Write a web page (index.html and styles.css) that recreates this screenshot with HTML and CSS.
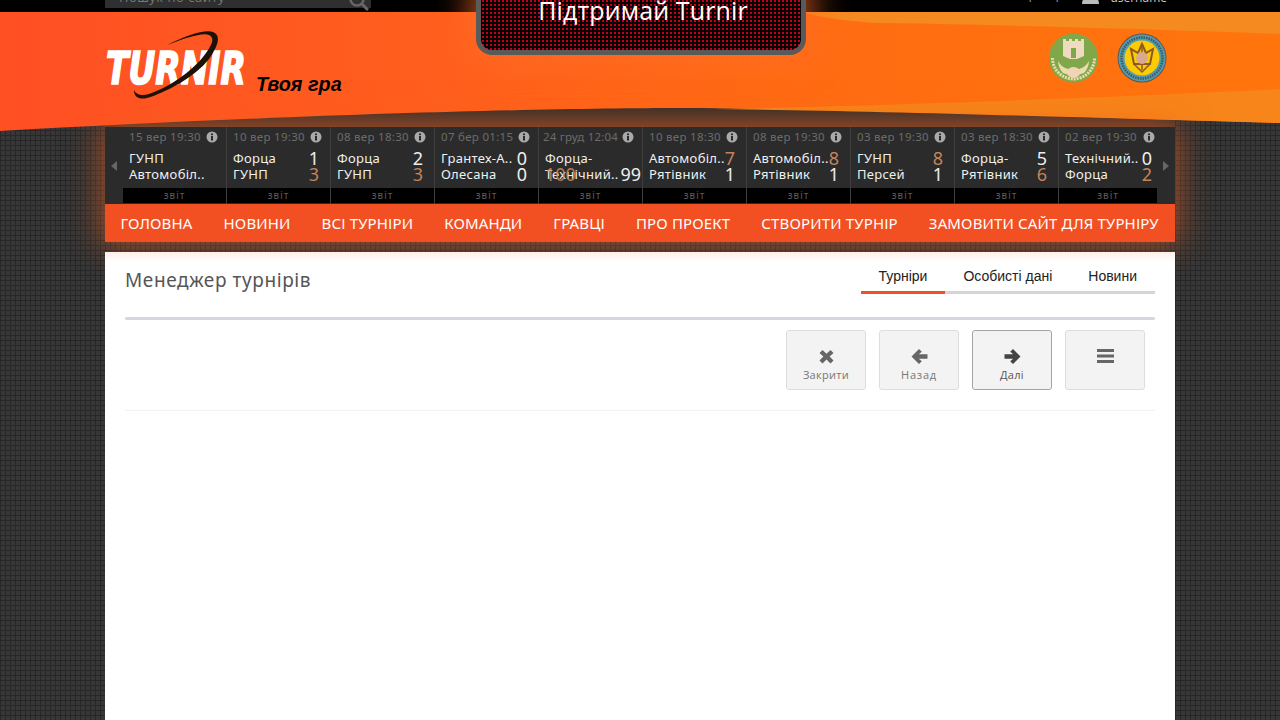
FILE: index.html
```html
<!DOCTYPE html>
<html lang="uk">
<head>
<meta charset="utf-8">
<title>Turnir</title>
<link rel="stylesheet" href="styles.css">
</head>
<body>
<div class="topbar">
  <div class="wrap topbar-in">
    <div class="search"><span>Пошук по сайту</span>
      <svg class="search-ico" width="20" height="20" viewBox="0 0 20 20"><circle cx="8" cy="8" r="6.5" fill="none" stroke="#666" stroke-width="2.5"/><path d="M13 13l6 6" stroke="#666" stroke-width="3"/></svg>
    </div>
    <div class="user">
      <span class="lang">Г</span><span class="lang">Г</span>
      <svg class="user-ico" width="17" height="16" viewBox="0 0 17 16"><circle cx="8.5" cy="4" r="4" fill="#bbb"/><path d="M0 16c0-6 4-7 8.5-7s8.500 1 8.500 7z" fill="#bbb"/></svg>
      <span class="username">username</span>
    </div>
  </div>
</div>

<header class="hero">
  <svg class="hero-bg" width="1280" height="125" viewBox="0 0 1280 125">
    <defs>
      <linearGradient id="hg" x1="0" x2="1" y1="0" y2="0">
        <stop offset="0" stop-color="#ff4f24"/>
        <stop offset=".3" stop-color="#ff5d1f"/>
        <stop offset=".6" stop-color="#ff6b14"/>
        <stop offset="1" stop-color="#ff750c"/>
      </linearGradient>
      <linearGradient id="sh" x1="0" x2="0" y1="0" y2="1">
        <stop offset="0" stop-color="#2d2a2a"/>
        <stop offset="1" stop-color="#4a362c"/>
      </linearGradient>
    </defs>
    <rect x="105" y="90" width="1070" height="25" fill="url(#sh)"/>
    <path d="M0 0H1280V111C1100 106 850 96 680 96C560 96 300 102 0 119Z" fill="url(#hg)"/>
    <path d="M800 0H1280V22C1150 17 960 12 880 11C850 10 820 5 800 0Z" fill="#f58a20"/>
    <path d="M700 97C820 96 1100 86 1280 77V111C1100 106 850 98 700 97Z" fill="#f7851a"/>
  </svg>
  <div class="wrap hero-in">
    <div class="brand">
      <svg class="logo" width="143" height="72" viewBox="0 0 143 72">
        <text class="logo-text" x="1" y="53" textLength="140" lengthAdjust="spacingAndGlyphs">TURNIR</text>
        <path d="M62 14C80 5 100 -2 108 1C116 4 114 14 104 28C90 46 60 62 42 67C34 69 29 66 29 59C31 64 37 65 44 63C62 57 85 42 98 26C108 13 110 7 104 4C98 1 80 7 62 14Z" fill="#1c1208"/>
      </svg>
      <span class="tagline">Твоя гра</span>
    </div>
    <div class="crests">
      <svg width="50" height="50" viewBox="0 0 50 50">
        <circle cx="24.500" cy="25" r="24.500" fill="#80a84a"/>
        <path d="M14 6h3v2h3V6h3v2h3V6h3v2h3V6h3v17l-7 3h-7l-7-3z" fill="#efdcc0"/>
        <rect x="22" y="15" width="5" height="10" fill="#80a84a"/>
        <path d="M3.500 25A21 21 0 0 0 45.500 25" fill="none" stroke="#e9dcae" stroke-width="3" stroke-dasharray="2 1"/>
        <path d="M9 28c3 5 6 7 10 8l1 6-6-2C11 37 9 32 9 28zM40 28c-3 5-6 7-10 8l-1 6 6-2c3-3 5-8 5-12z" fill="#e9dcae"/>
        <path d="M18 37c4-4 9-4 13 0 1 5-3 8-6.500 8S17 42 18 37z" fill="#f3d3b6"/>
      </svg>
      <svg width="50" height="50" viewBox="0 0 50 50">
        <circle cx="25" cy="25" r="24.500" fill="#5b5b50"/>
        <circle cx="25" cy="25" r="23.500" fill="#549bb0"/>
        <circle cx="25" cy="25" r="20.500" fill="none" stroke="#3c5a60" stroke-width="2.500" stroke-dasharray="1.500 1"/>
        <circle cx="25" cy="25" r="17.500" fill="#fccb06"/>
        <path d="M25 11l4 9 7-4-3 15H17l-3-15 7 4z" fill="none" stroke="#8c5a20" stroke-width="2"/>
        <path d="M25 13v24M17 31l8 8 8-8" fill="none" stroke="#8c5a20" stroke-width="1.500"/>
        <circle cx="25" cy="25" r="6" fill="#d9a890"/>
      </svg>
    </div>
  </div>
  <div class="promo"><span>Підтримай Turnir</span></div>
</header>

<div class="wrap band">
  <section class="ticker">
    <div class="arrow"><i class="tri tri-l"></i></div>
    <div class="cards">
      <article class="card">
        <div class="date"><span>15 вер 19:30</span><svg class="info" viewBox="0 0 12 12"><circle cx="6" cy="6" r="5.500"/><rect x="5" y="5" width="2" height="4.500"/><rect x="5" y="2.500" width="2" height="1.700"/></svg></div>
        <div class="teams"><div class="row"><span>ГУНП</span></div><div class="row"><span>Автомобіл..</span></div></div>
        <a class="report">звіт</a>
      </article>
      <article class="card">
        <div class="date"><span>10 вер 19:30</span><svg class="info" viewBox="0 0 12 12"><circle cx="6" cy="6" r="5.500"/><rect x="5" y="5" width="2" height="4.500"/><rect x="5" y="2.500" width="2" height="1.700"/></svg></div>
        <div class="teams"><div class="row"><span>Форца</span><b>1</b></div><div class="row"><span>ГУНП</span><b class="win">3</b></div></div>
        <a class="report">звіт</a>
      </article>
      <article class="card">
        <div class="date"><span>08 вер 18:30</span><svg class="info" viewBox="0 0 12 12"><circle cx="6" cy="6" r="5.500"/><rect x="5" y="5" width="2" height="4.500"/><rect x="5" y="2.500" width="2" height="1.700"/></svg></div>
        <div class="teams"><div class="row"><span>Форца</span><b>2</b></div><div class="row"><span>ГУНП</span><b class="win">3</b></div></div>
        <a class="report">звіт</a>
      </article>
      <article class="card">
        <div class="date"><span>07 бер 01:15</span><svg class="info" viewBox="0 0 12 12"><circle cx="6" cy="6" r="5.500"/><rect x="5" y="5" width="2" height="4.500"/><rect x="5" y="2.500" width="2" height="1.700"/></svg></div>
        <div class="teams"><div class="row"><span>Грантех-А..</span><b>0</b></div><div class="row"><span>Олесана</span><b>0</b></div></div>
        <a class="report">звіт</a>
      </article>
      <article class="card card-wide">
        <div class="date"><span>24 груд 12:04</span><svg class="info" viewBox="0 0 12 12"><circle cx="6" cy="6" r="5.500"/><rect x="5" y="5" width="2" height="4.500"/><rect x="5" y="2.500" width="2" height="1.700"/></svg></div>
        <div class="teams"><div class="row"><span>Форца-</span></div><div class="row"><b class="win over">100</b><span>Технічний..</span><b>99</b></div></div>
        <a class="report">звіт</a>
      </article>
      <article class="card">
        <div class="date"><span>10 вер 18:30</span><svg class="info" viewBox="0 0 12 12"><circle cx="6" cy="6" r="5.500"/><rect x="5" y="5" width="2" height="4.500"/><rect x="5" y="2.500" width="2" height="1.700"/></svg></div>
        <div class="teams"><div class="row"><span>Автомобіл..</span><b class="win">7</b></div><div class="row"><span>Рятівник</span><b>1</b></div></div>
        <a class="report">звіт</a>
      </article>
      <article class="card">
        <div class="date"><span>08 вер 19:30</span><svg class="info" viewBox="0 0 12 12"><circle cx="6" cy="6" r="5.500"/><rect x="5" y="5" width="2" height="4.500"/><rect x="5" y="2.500" width="2" height="1.700"/></svg></div>
        <div class="teams"><div class="row"><span>Автомобіл..</span><b class="win">8</b></div><div class="row"><span>Рятівник</span><b>1</b></div></div>
        <a class="report">звіт</a>
      </article>
      <article class="card">
        <div class="date"><span>03 вер 19:30</span><svg class="info" viewBox="0 0 12 12"><circle cx="6" cy="6" r="5.500"/><rect x="5" y="5" width="2" height="4.500"/><rect x="5" y="2.500" width="2" height="1.700"/></svg></div>
        <div class="teams"><div class="row"><span>ГУНП</span><b class="win">8</b></div><div class="row"><span>Персей</span><b>1</b></div></div>
        <a class="report">звіт</a>
      </article>
      <article class="card">
        <div class="date"><span>03 вер 18:30</span><svg class="info" viewBox="0 0 12 12"><circle cx="6" cy="6" r="5.500"/><rect x="5" y="5" width="2" height="4.500"/><rect x="5" y="2.500" width="2" height="1.700"/></svg></div>
        <div class="teams"><div class="row"><span>Форца-</span><b>5</b></div><div class="row"><span>Рятівник</span><b class="win">6</b></div></div>
        <a class="report">звіт</a>
      </article>
      <article class="card">
        <div class="date"><span>02 вер 19:30</span><svg class="info" viewBox="0 0 12 12"><circle cx="6" cy="6" r="5.500"/><rect x="5" y="5" width="2" height="4.500"/><rect x="5" y="2.500" width="2" height="1.700"/></svg></div>
        <div class="teams"><div class="row"><span>Технічний..</span><b>0</b></div><div class="row"><span>Форца</span><b class="win">2</b></div></div>
        <a class="report">звіт</a>
      </article>
    </div>
    <div class="arrow"><i class="tri tri-r"></i></div>
  </section>
  <nav class="nav">
    <a>ГОЛОВНА</a><a>НОВИНИ</a><a>ВСІ ТУРНІРИ</a><a>КОМАНДИ</a><a>ГРАВЦІ</a><a>ПРО ПРОЕКТ</a><a>СТВОРИТИ ТУРНІР</a><a>ЗАМОВИТИ САЙТ ДЛЯ ТУРНІРУ</a>
  </nav>
</div>

<main class="wrap content">
  <div class="title-row">
    <h1>Менеджер турнірів</h1>
    <ul class="tabs">
      <li class="active">Турніри</li><li>Особисті дані</li><li>Новини</li>
    </ul>
  </div>
  <div class="rule"></div>
  <div class="toolbar">
    <button class="tool">
      <svg viewBox="0 0 17 17" width="17" height="17"><path d="M4.500 2L8.500 5.800 12.500 2 15.500 5 11.600 8.500 15.500 12.500 12.500 15.500 8.500 11.600 4.500 15.500 1.500 12.500 5.400 8.500 1.500 5z" fill="#666"/></svg>
      <span>Закрити</span>
    </button>
    <button class="tool">
      <svg viewBox="0 0 17 17" width="17" height="17"><path d="M.5 8.500L8 1l2.800 2.800-3 2.400h8.700v4.600H7.800l3 2.400L8 16z" fill="#666"/></svg>
      <span class="spaced">Назад</span>
    </button>
    <button class="tool tool-on">
      <svg viewBox="0 0 17 17" width="17" height="17"><path d="M16.500 8.500L9 1 6.200 3.800l3 2.400H.5v4.600h8.700l-3 2.400L9 16z" fill="#444"/></svg>
      <span>Далі</span>
    </button>
    <button class="tool">
      <svg viewBox="0 0 17 17" width="17" height="17"><path d="M0 1h17v3H0zM0 6.500h17v3H0zM0 12h17v3H0z" fill="#666"/></svg>
    </button>
  </div>
  <div class="hr"></div>
</main>
</body>
</html>
```

FILE: styles.css
```css
* { box-sizing: border-box; }
html, body { margin: 0; height: 720px; overflow: hidden; }
body {
  background-color: #373737;
  background-image:
    linear-gradient(#272727 1px, transparent 1px),
    linear-gradient(90deg, #272727 1px, transparent 1px);
  background-size: 5px 5px;
  font-family: "Open Sans", "Noto Sans", sans-serif;
}
.wrap { width: 1070px; margin: 0 auto; }

.topbar { height: 12px; background: #000; overflow: hidden; position: relative; }
.topbar-in { display: flex; justify-content: space-between; align-items: flex-end; height: 8px; }
.search {
  width: 266px; height: 30px; flex: none; background: #2f2f2f;
  color: #777; font-size: 13px; letter-spacing: .5px;
  display: flex; justify-content: space-between; align-items: flex-end;
  padding: 0 2px 0 14px;
}
.search span { line-height: 14px; margin-bottom: 4px; }
.search-ico { margin-bottom: -3px; }
.user {
  width: 160px; height: 30px; flex: none;
  display: flex; align-items: flex-end; justify-content: flex-end;
  color: #ccc; font-size: 12px; padding-right: 8px;
}
.lang { width: 27px; line-height: 14px; color: #999; font-size: 12px; margin-bottom: 3px; }
.user-ico { margin: 0 11px 4px 0; }
.username { line-height: 14px; margin-bottom: 3px; }

.hero { height: 115px; position: relative; }
.hero-bg { position: absolute; left: 0; top: 0; }
.hero-in {
  position: relative; height: 100%;
  display: flex; justify-content: space-between; align-items: flex-start;
}
.brand { display: flex; align-items: flex-start; padding-top: 19px; }
.logo { flex: none; overflow: visible; }
.logo-text {
  font-family: "DejaVu Sans", sans-serif; font-weight: 700; font-style: italic; font-size: 44px;
  fill: #fff; stroke: #fff; stroke-width: 1.6px;
}
.tagline {
  font-family: "Liberation Sans", sans-serif; font-weight: 700; font-style: italic;
  font-size: 19.800px; color: #000; margin: 41px 0 0 9px; line-height: 24px;
  margin-left: 8px;
}
.crests { display: flex; gap: 18px; padding: 21px 8px 0 0; }
.promo {
  position: absolute; left: 476px; top: -30px; width: 330px; height: 73px;
  border: 5px solid #5a5a5a; border-radius: 0 0 16px 16px;
  background-color: #080002;
  background-image: radial-gradient(circle, #c80018 0.7px, transparent 1.1px);
  background-size: 4px 4px;
  color: #fff; font-size: 25px; line-height: 34px; text-align: center;
  padding-top: 11px;
  box-shadow: 0 0 34px 6px rgba(255, 110, 40, .7);
}
.promo span { display: block; margin-left: 4px; margin-top: -5px; letter-spacing: .12px; }

.band {
  position: relative; z-index: 2;
  box-shadow: 0 0 30px 3px rgba(240, 95, 30, .6);
}
.ticker { height: 77px; background: #2b2b2b; display: flex; }
.arrow { width: 18px; flex: none; display: flex; align-items: center; justify-content: center; position: relative; }
.tri { display: block; width: 0; height: 0; border-style: solid; border-color: transparent; }
.tri-l { border-width: 5px 6px 5px 0; border-right-color: #666; }
.tri-r { border-width: 5px 0 5px 6px; border-left-color: #666; }
.cards { display: flex; width: 1034px; }
.card {
  width: 104px; flex: none; height: 77px; position: relative;
  border-right: 1px solid #3e3e3e;
  display: flex; flex-direction: column;
}
.card:last-child { border-right: 0; }
.card:last-child .report { width: 98px; }
.date {
  height: 19px; flex: none; padding: 0 8px 0 6px;
  display: flex; justify-content: space-between; align-items: center;
  color: #6c6c6c; font-size: 11.500px; letter-spacing: .3px; white-space: nowrap;
  font-family: "Noto Sans", sans-serif;
}
.card-wide .date { padding-left: 4px; letter-spacing: .2px; }
.info { width: 12px; height: 12px; fill: #a9a9a9; flex: none; }
.info rect { fill: #2b2b2b; }
.teams { margin-top: 4px; height: 32px; flex: none; padding: 0 11px 0 6px; }
.card-wide .teams { padding-left: 6px; padding-right: 1px; }
.row {
  position: relative; height: 16px; line-height: 16px;
  display: flex; justify-content: space-between; align-items: center;
  color: #f0f0f0; font-size: 13px; font-family: "Noto Sans", sans-serif; letter-spacing: .3px;
  white-space: nowrap;
}
.row b { font-weight: 400; font-size: 18px; letter-spacing: 0; color: #eee; }
.row b.win { color: #c6835a; }
.row b.over { position: absolute; left: 0; top: 0; opacity: .9; }
.report {
  margin-top: 6px; height: 15px; flex: none; background: #000; display: block; text-align: center;
  color: #5c5c5c; font-size: 10px; line-height: 15px; letter-spacing: 1px;
  font-family: "Noto Sans", sans-serif;
}
.nav { height: 38px; background: #f25022; display: flex; }
.nav a {
  color: #fff; font-size: 15px; line-height: 38px; padding: 0 15.500px; letter-spacing: .15px;
  white-space: nowrap; font-family: "Noto Sans", sans-serif;
}

.content {
  margin-top: 10px; background: linear-gradient(#ffeee8, #fff 10px); height: 468px; padding: 0 20px;
  position: relative; z-index: 3;
}
.title-row { display: flex; justify-content: space-between; height: 42px; padding-top: 14px; }
h1 { margin: 0; font-size: 19px; font-weight: 400; line-height: 28px; color: #555; font-family: "Noto Sans", sans-serif; letter-spacing: .6px; }
.tabs { display: flex; list-style: none; margin: 0; padding: 0; height: 28px; }
.tabs li {
  padding: 0 18px; height: 28px; line-height: 21px; border-bottom: 3px solid #d5d5d5;
  font-family: "Liberation Sans", sans-serif; font-size: 14px; color: #222; white-space: nowrap;
}
.tabs li.active { border-bottom-color: #f25022; }
.rule { height: 3px; margin-top: 23px; background: #d4d6e0; border-radius: 2px; }
.toolbar { display: flex; justify-content: flex-end; gap: 13px; padding: 10px 10px 0 0; }
.tool {
  width: 80px; height: 60px; padding: 17px 0 0; background: #f3f3f3;
  border: 1px solid #ddd; border-radius: 3px;
  display: flex; flex-direction: column; align-items: center;
  color: #777; font-family: "Open Sans", sans-serif; font-size: 11px; line-height: 14px;
}
.tool span { margin-top: 3px; letter-spacing: .3px; }
.tool span.spaced { letter-spacing: .8px; }
.tool svg { display: block; }
.tool-on { border-color: #a3a3a3; color: #555; }
.hr { height: 1px; background: #f2f2f2; margin-top: 20px; }
```
